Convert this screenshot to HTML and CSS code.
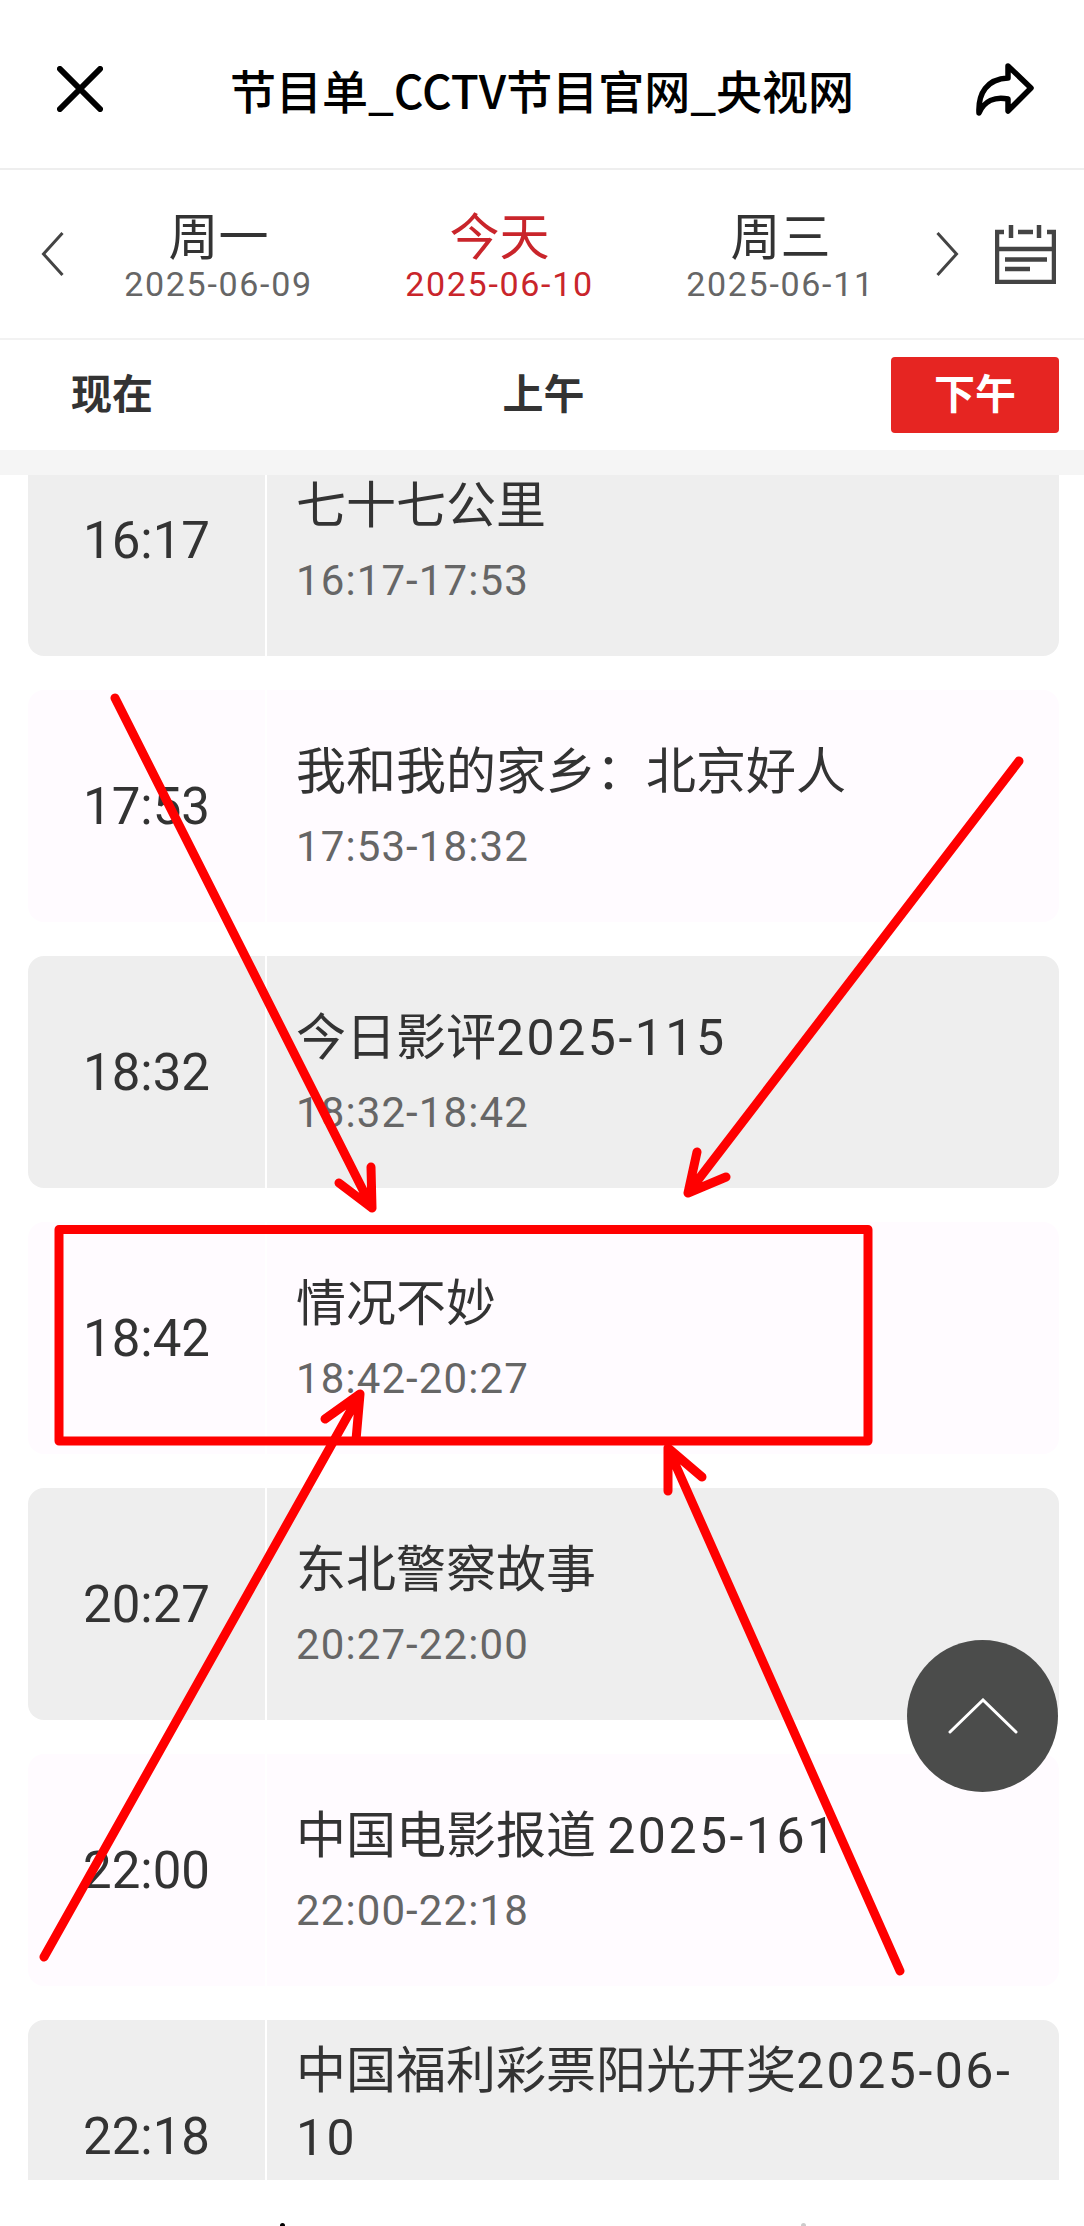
FILE: index.html
```html
<!DOCTYPE html>
<html lang="zh-CN">
<head>
  <meta charset="UTF-8" />
  <title>节目单_CCTV节目官网_央视网</title>
  <link rel="stylesheet" href="styles.css">
</head>
<body>

<div class="page">
  <!-- Top bar -->
  <header class="topbar">
    <svg class="icon-close" viewBox="0 0 48 48"><path d="M3 3L45 45M45 3L3 45"/></svg>
    <h1>节目单_CCTV节目官网_央视网</h1>
    <svg class="icon-share" viewBox="0 0 59 53"><path d="M33 3L56 25L33 48V36C20 33 9 38 4 50C3 30 12 16 33 15Z"/></svg>
  </header>

  <!-- Day switcher -->
  <div class="days">
    <svg class="chev" viewBox="0 0 24 46"><path d="M22 2L3 23L22 44"/></svg>
    <div class="day"><b>周一</b><span>2025-06-09</span></div>
    <div class="day active"><b>今天</b><span>2025-06-10</span></div>
    <div class="day"><b>周三</b><span>2025-06-11</span></div>
    <svg class="chev chev-next" viewBox="0 0 24 46"><path d="M2 2L21 23L2 44"/></svg>
    <svg class="icon-cal" viewBox="0 0 61 60"><path d="M9 8H2V58H59V8H52M2 25H59M16 1V14M44 1V14M23 8H38M10 35.500H52M10 45H35"/></svg>
  </div>

  <!-- Period tabs -->
  <div class="tabs">
    <a href="#">现在</a>
    <a href="#">上午</a>
    <a href="#" class="active">下午</a>
  </div>
  <div class="band"></div>

  <!-- Programme list -->
  <div class="list">
    <div class="rows">
      <div class="row"><div class="time">16:17</div><div class="info"><div class="name">七十七公里</div><div class="range">16:17-17:53</div></div></div>
      <div class="row alt"><div class="time">17:53</div><div class="info"><div class="name">我和我的家乡：北京好人</div><div class="range">17:53-18:32</div></div></div>
      <div class="row"><div class="time">18:32</div><div class="info"><div class="name">今日影评<span class="num">2025-115</span></div><div class="range">18:32-18:42</div></div></div>
      <div class="row alt"><div class="time">18:42</div><div class="info"><div class="name">情况不妙</div><div class="range">18:42-20:27</div></div></div>
      <div class="row"><div class="time">20:27</div><div class="info"><div class="name">东北警察故事</div><div class="range">20:27-22:00</div></div></div>
      <div class="row alt"><div class="time">22:00</div><div class="info"><div class="name">中国电影报道 <span class="num">2025-161</span></div><div class="range">22:00-22:18</div></div></div>
      <div class="row long"><div class="time">22:18</div><div class="info"><div class="name">中国福利彩票阳光开奖<span class="num">2025-06-10</span></div></div></div>
    </div>
  </div>

  <!-- Tops of the bottom bar icons, just inside the window -->
  <div class="peek">
    <i></i>
    <i class="dim"></i>
  </div>
</div>

<!-- Back to top -->
<div class="to-top">
  <svg viewBox="0 0 70 36"><path d="M2 34L35 2L68 34"/></svg>
</div>

<!-- Red annotations drawn over the screenshot -->
<svg class="marks" viewBox="0 0 1084 2226">
  <rect x="59" y="1229.500" width="809" height="211.500"/>
  <path d="M115 698L372 1208M371 1167L372 1208M339 1183L372 1208"/>
  <path d="M1019 761L688 1193M697 1152L688 1193M726 1177L688 1193"/>
  <path d="M44 1957L360 1394M325 1419L360 1394M356 1440L360 1394"/>
  <path d="M900 1971L668 1448M668 1491L668 1448M702 1477L668 1448"/>
</svg>

</body>
</html>
```

FILE: styles.css
```css
* {
  margin: 0;
  padding: 0;
  box-sizing: border-box;
}

html, body {
  width: 1084px;
  height: 2226px;
  overflow: hidden;
}

body {
  font-family: "Noto Sans CJK SC", "Roboto", sans-serif;
  background-color: #fff;
  color: #333;
  position: relative;
}

svg {
  fill: none;
  display: block;
}

/* Top bar */
.topbar {
  height: 170px;
  border-bottom: 2px solid #eee;
  display: flex;
  align-items: center;
  justify-content: space-between;
  padding: 10px 50px 0 57px;
  color: #000;
}

.topbar h1 {
  font-size: 46px;
  font-weight: 500;
  margin-left: 6px;
}

.icon-close {
  width: 46px;
  height: 46px;
  stroke: #000;
  stroke-width: 6;
  stroke-linecap: round;
}

.icon-share {
  width: 59px;
  height: 53px;
  stroke: #000;
  stroke-width: 5.500;
  stroke-linejoin: round;
}

/* Day switcher */
.days {
  height: 170px;
  border-bottom: 2px solid #f2f2f2;
  display: flex;
  align-items: center;
  padding: 0 28px 0 40px;
}

.chev {
  width: 25px;
  height: 46px;
  margin-right: 13px;
  stroke: #444;
  stroke-width: 3;
  flex-shrink: 0;
}

.chev-next {
  margin: 0 0 0 14px;
}

.day {
  width: 281px;
  flex-shrink: 0;
  text-align: center;
}

.day b {
  display: block;
  font-size: 50px;
  font-weight: 400;
  line-height: 60px;
}

.day span {
  display: block;
  font-family: Roboto, sans-serif;
  font-size: 34px;
  letter-spacing: 1.700px;
  line-height: 42px;
  color: #666;
}

.day.active b,
.day.active span {
  color: #c9252b;
}

.icon-cal {
  width: 61px;
  height: 60px;
  margin-left: auto;
  stroke: #444;
  stroke-width: 4.500;
}

/* Period tabs */
.tabs {
  height: 110px;
  display: flex;
  align-items: center;
  justify-content: space-between;
  padding: 0 25px 0 28px;
}

.tabs a {
  width: 168px;
  height: 76px;
  line-height: 69px;
  text-align: center;
  font-size: 41px;
  font-weight: 700;
  color: #333;
  text-decoration: none;
  border-radius: 4px;
}

.tabs a.active {
  background-color: #e62522;
  color: #fff;
}

.band {
  height: 25px;
  background-color: #f5f5f5;
}

/* Programme list */
.list {
  height: 1705px;
  overflow: hidden;
  padding: 0 25px 0 28px;
}

.rows {
  margin-top: -51px;
  display: flex;
  flex-direction: column;
  gap: 34px;
}

.row {
  height: 232px;
  display: flex;
  background-color: #eee;
  border-radius: 16px;
  overflow: hidden;
}

.row.alt {
  background-color: #fffbff;
}

.time {
  width: 239px;
  flex-shrink: 0;
  border-right: 2px solid #fff;
  display: flex;
  align-items: center;
  justify-content: center;
  font-family: Roboto, sans-serif;
  font-size: 51px;
}

.info {
  flex: 1;
  display: flex;
  flex-direction: column;
  justify-content: center;
  padding: 0 20px 0 29px;
}

.row.long .info {
  justify-content: flex-start;
  padding-top: 13px;
}

.name {
  font-size: 50px;
  line-height: 67px;
}

.num {
  font-family: Roboto, sans-serif;
  letter-spacing: 2.500px;
  line-height: 1;
}

.range {
  font-family: Roboto, sans-serif;
  font-size: 42px;
  letter-spacing: 1.100px;
  line-height: 64px;
  margin-top: 14px;
  color: #666;
}

/* Bottom bar peek */
.peek {
  height: 46px;
  display: flex;
  align-items: flex-end;
  gap: 516px;
  padding-left: 280px;
}

.peek i {
  width: 5px;
  height: 3px;
  border-radius: 3px 3px 0 0;
  background-color: #000;
}

.peek i.dim {
  background-color: #ccc;
}

/* Back to top */
.to-top {
  position: absolute;
  left: 907px;
  top: 1640px;
  width: 151px;
  height: 152px;
  border-radius: 50%;
  background-color: #4b4c4b;
  display: flex;
  align-items: center;
  justify-content: center;
}

.to-top svg {
  width: 70px;
  height: 36px;
  stroke: #fff;
  stroke-width: 3;
  stroke-linecap: round;
}

/* Red annotations */
.marks {
  position: absolute;
  left: 0;
  top: 0;
  width: 1084px;
  height: 2226px;
  stroke: #f00;
  stroke-width: 9;
  stroke-linecap: round;
  stroke-linejoin: round;
}
```
